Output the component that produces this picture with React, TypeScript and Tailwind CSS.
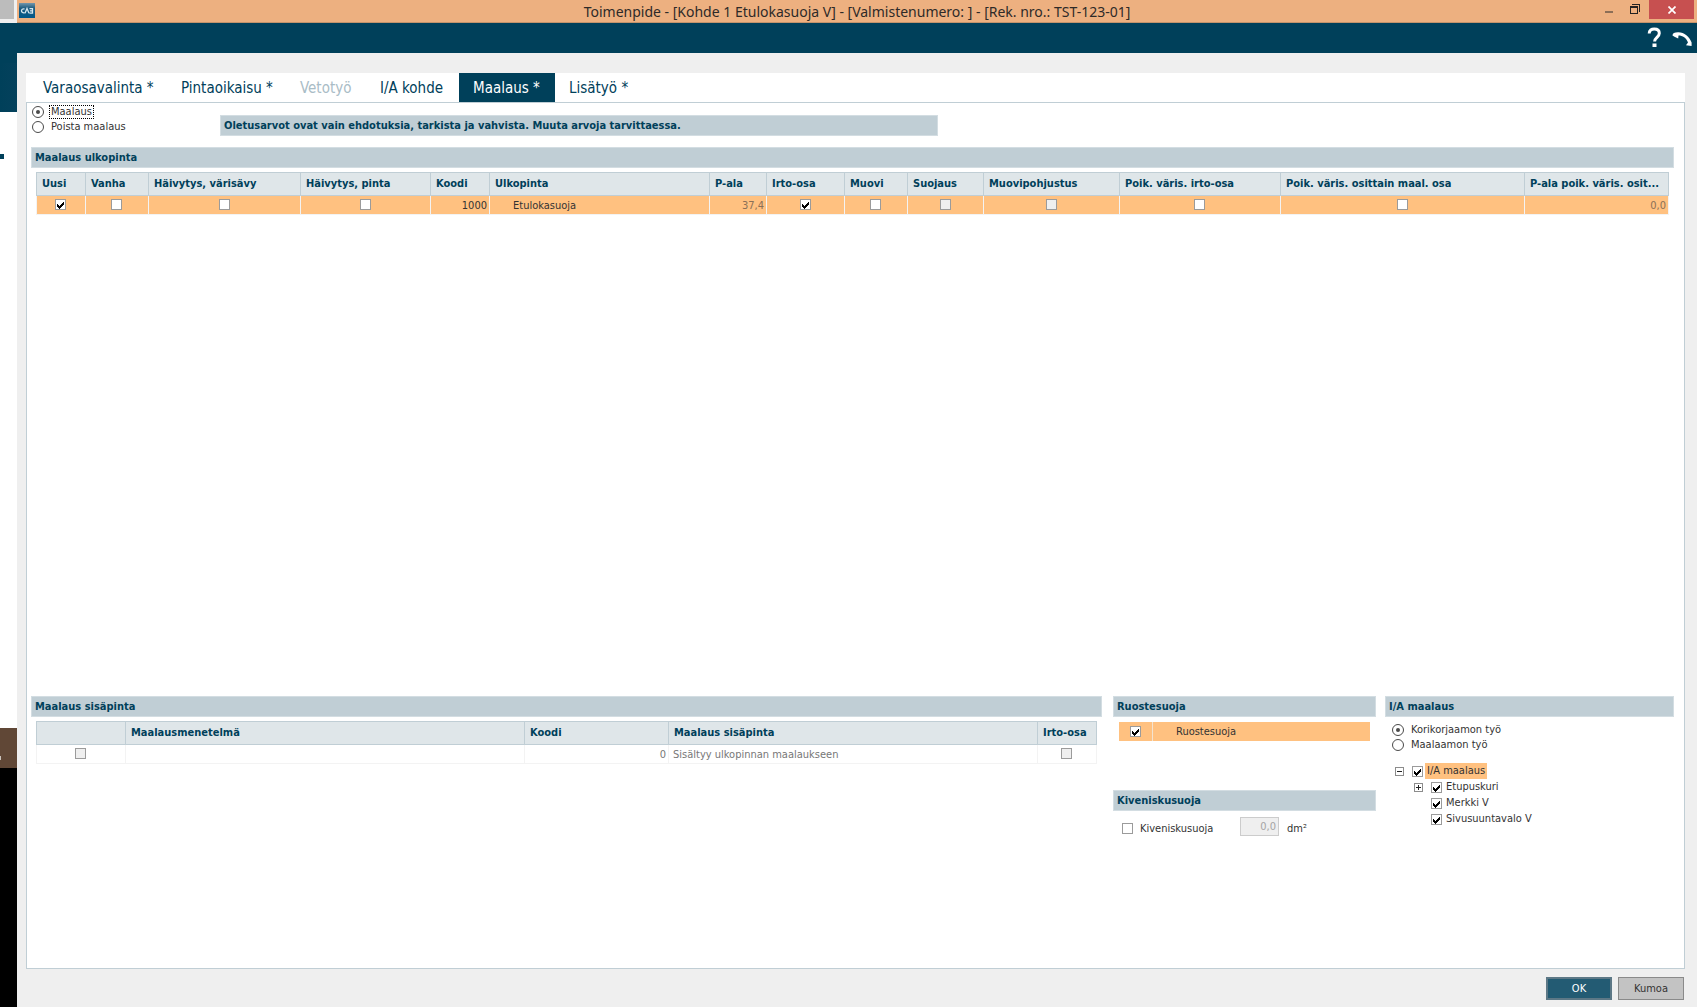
import { useState } from 'react'
import type { ReactNode } from 'react'

function Check({
  id,
  label,
  initial = false,
  disabled = false,
}: {
  id?: string
  label?: string
  initial?: boolean
  disabled?: boolean
}) {
  const [on, setOn] = useState(initial)
  return (
    <span className="relative inline-block size-[11px] shrink-0 align-top">
      <input
        id={id}
        type="checkbox"
        aria-label={label}
        checked={on}
        disabled={disabled}
        onChange={() => setOn(!on)}
        className="block size-[11px] appearance-none border border-[#9b9b9b] bg-white disabled:bg-[#efefef]"
      />
      {on && (
        <svg viewBox="0 0 11 11" className="pointer-events-none absolute inset-0 size-[11px]" shapeRendering="crispEdges">
          <path
            d="M2 5h1v3h-1z M3 6h1v3h-1z M4 7h1v3h-1z M5 6h1v3h-1z M6 5h1v3h-1z M7 4h1v3h-1z M8 3h1v3h-1z"
            fill="#000"
          />
        </svg>
      )}
    </span>
  )
}

function Radio({
  name,
  label,
  checked,
  onSelect,
  focused = false,
}: {
  name: string
  label: string
  checked: boolean
  onSelect: () => void
  focused?: boolean
}) {
  return (
    <label className="flex h-[15px] items-center gap-[5px]">
      <span className="relative inline-block size-3">
        <input
          type="radio"
          name={name}
          checked={checked}
          onChange={onSelect}
          className="block size-3 appearance-none rounded-full border border-[#4a4a4a] bg-white"
        />
        {checked && <span className="absolute inset-1 rounded-full bg-[#4a4a4a]" />}
      </span>
      <span className={focused ? 'border border-dotted border-black px-px leading-3' : 'px-0.5 leading-[14px]'}>{label}</span>
    </label>
  )
}

function SectionBar({ children }: { children: ReactNode }) {
  return (
    <h2 className="flex h-[21px] items-center border border-[#d3dde2] bg-[#c0ced5] px-[3px] text-[11px] font-bold text-[#00405a]">
      {children}
    </h2>
  )
}

const tabs = [
  { label: 'Varaosavalinta *', width: 'w-[138px]' },
  { label: 'Pintaoikaisu *', width: 'w-[119px]' },
  { label: 'Vetotyö', width: 'w-[80px]', disabled: true },
  { label: 'I/A kohde', width: 'w-[93px]' },
  { label: 'Maalaus *', width: 'w-[96px]', active: true },
  { label: 'Lisätyö *', width: 'w-[96px]' },
]

type Cell = { check?: boolean; disabled?: boolean; text?: string; align?: string }

const outer: { title: string; width: string; cell: Cell }[] = [
  { title: 'Uusi', width: 'w-[49px]', cell: { check: true } },
  { title: 'Vanha', width: 'w-[63px]', cell: { check: false } },
  { title: 'Häivytys, värisävy', width: 'w-[152px]', cell: { check: false } },
  { title: 'Häivytys, pinta', width: 'w-[130px]', cell: { check: false } },
  { title: 'Koodi', width: 'w-[59px]', cell: { text: '1000', align: 'text-right pr-0.5' } },
  { title: 'Ulkopinta', width: 'w-[220px]', cell: { text: 'Etulokasuoja', align: 'text-left pl-[23px]' } },
  { title: 'P-ala', width: 'w-[57px]', cell: { text: '37,4', align: 'text-right pr-0.5 text-[#8a7057]' } },
  { title: 'Irto-osa', width: 'w-[78px]', cell: { check: true } },
  { title: 'Muovi', width: 'w-[63px]', cell: { check: false } },
  { title: 'Suojaus', width: 'w-[76px]', cell: { check: false, disabled: true } },
  { title: 'Muovipohjustus', width: 'w-[136px]', cell: { check: false, disabled: true } },
  { title: 'Poik. väris. irto-osa', width: 'w-[161px]', cell: { check: false } },
  { title: 'Poik. väris. osittain maal. osa', width: 'w-[244px]', cell: { check: false } },
  { title: 'P-ala poik. väris. osit...', width: 'w-[144px]', cell: { text: '0,0', align: 'text-right pr-0.5 text-[#8a7057]' } },
]

const inner: { title: string; width: string; cell: Cell }[] = [
  { title: '', width: 'w-[89px]', cell: { check: false, disabled: true } },
  { title: 'Maalausmenetelmä', width: 'w-[399px]', cell: { text: '' } },
  { title: 'Koodi', width: 'w-[144px]', cell: { text: '0', align: 'text-right pr-0.5' } },
  { title: 'Maalaus sisäpinta', width: 'w-[369px]', cell: { text: 'Sisältyy ulkopinnan maalaukseen', align: 'text-left pl-1' } },
  { title: 'Irto-osa', width: 'w-[59px]', cell: { check: false, disabled: true } },
]

function Grid({ columns, highlighted }: { columns: typeof outer; highlighted?: boolean }) {
  return (
    <table className="w-full table-fixed border-collapse">
      <thead>
        <tr className="h-[23px] bg-[#dfe6e9]">
          {columns.map((c) => (
            <th
              key={c.title}
              scope="col"
              className={`${c.width} overflow-hidden border border-[#c0ced5] px-[5px] pt-0 pb-px text-left font-bold whitespace-nowrap text-[#00405a]`}
            >
              {c.title}
            </th>
          ))}
        </tr>
      </thead>
      <tbody>
        <tr className={highlighted ? 'h-[19px] bg-[#ffc180] text-[#333]' : 'h-[19px] bg-white text-[#777]'}>
          {columns.map((c) => (
            <td
              key={c.title}
              className={`border border-[#f3f3f3] p-0 pt-0.5 whitespace-nowrap ${c.cell.align ?? 'pr-px text-center'}`}
            >
              {c.cell.check !== undefined ? (
                <Check label={c.title || 'Valitse'} initial={c.cell.check} disabled={c.cell.disabled} />
              ) : (
                c.cell.text
              )}
            </td>
          ))}
        </tr>
      </tbody>
    </table>
  )
}

function Expander({ open }: { open: boolean }) {
  return (
    <button
      type="button"
      aria-label={open ? 'Sulje' : 'Avaa'}
      className="flex size-[9px] shrink-0 items-center justify-center border border-[#8c8c8c] bg-white"
    >
      <svg viewBox="0 0 7 7" className="size-[7px] shrink-0" shapeRendering="crispEdges">
        <path d={open ? 'M1 3h5v1h-5z' : 'M1 3h5v1h-5z M3 1h1v5h-1z'} fill="#222" />
      </svg>
    </button>
  )
}

function Backdrop() {
  return (
    <div className="flex w-[17px] shrink-0 flex-col bg-white">
      <div className="h-[23px] bg-[#efefef] pr-[3px]">
        <div className="h-[19px] bg-[#bcbcbc]" />
      </div>
      <div className="h-10 bg-[#00405a]" />
      <div className="h-[49px] bg-linear-to-r from-[#00405a] to-[#04415c]" />
      <div className="flex grow items-start pt-[42px]">
        <div className="h-[5px] w-1 bg-[#00405a]" />
      </div>
      <div className="flex h-10 items-center bg-[#604736] pt-5">
        <div className="h-1 w-px bg-[#c9c1ba]" />
      </div>
      <div className="h-[239px] bg-black" />
    </div>
  )
}

export default function App() {
  const [mode, setMode] = useState(0)
  const [work, setWork] = useState(0)
  return (
    <div className="flex min-h-screen bg-[#efefef] font-['DejaVu_Sans_Condensed','DejaVu_Sans',sans-serif] text-[11px] leading-[14px] text-[#333]">
      <Backdrop />
      <div className="flex min-w-0 grow flex-col">
        <header className="relative flex h-[23px] items-start justify-between border-b border-[#c4936c] bg-[#edb080] pr-[3px] pl-0.5">
          <svg viewBox="0 0 16 15" className="mt-[3px] h-[15px] w-4" role="img" aria-label="CAB">
            <defs>
              <linearGradient id="logo" x1="0" y1="0" x2="0" y2="1">
                <stop offset="0" stopColor="#7397ac" />
                <stop offset="0.35" stopColor="#1d5c80" />
                <stop offset="1" stopColor="#00588a" />
              </linearGradient>
            </defs>
            <rect width="16" height="15" fill="url(#logo)" />
            <path
              d="M5.500 6C1.500 5 1.500 10.500 5.500 9.800M6 10.300l2-4.800 2 4.800M10.500 5.700h3v4.400h-3M11 7.900h2.500"
              fill="none"
              stroke="#d5e6ee"
              strokeWidth="1.300"
            />
          </svg>
          <h1 className="pointer-events-none absolute inset-0 text-center font-['Noto_Sans',sans-serif] text-[14px] leading-[23px] font-normal text-[#2e2a28]">
            Toimenpide - [Kohde 1 Etulokasuoja V] - [Valmistenumero: ] - [Rek. nro.: TST-123-01]
          </h1>
          <div className="relative flex h-[19px]">
            <button type="button" aria-label="Pienennä" className="flex w-[26px] items-center justify-center pt-[5px]">
              <span className="h-0.5 w-2 bg-[#8c6e56]" />
            </button>
            <button type="button" aria-label="Palauta" className="flex w-[27px] items-start justify-start pt-1 pl-2">
              <svg viewBox="0 0 10 10" className="size-2.5" shapeRendering="crispEdges" fill="#222">
                <path d="M0 2h8v8h-8z M1 4v5h6v-5z" fillRule="evenodd" />
                <path d="M2 0h8v8h-1v-7h-7z" />
              </svg>
            </button>
            <button type="button" aria-label="Sulje" className="flex w-[45px] items-center justify-center bg-[#c75050]">
              <svg viewBox="0 0 8 8" className="size-2" fill="none" stroke="#fff" strokeWidth="1.700">
                <path d="M0.500 0.500l7 7M7.500 0.500l-7 7" />
              </svg>
            </button>
          </div>
        </header>

        <div className="flex h-[30px] items-start justify-end gap-2.5 bg-[#00405a] pt-1 pr-[5px]">
          <button type="button" aria-label="Ohje">
            <svg viewBox="0 0 15 21" className="h-[21px] w-[15px]">
              <path
                d="M2.200 6.500C2.200 3.200 4.500 2 7.300 2c3 0 5 1.500 5 4.200 0 4-4.700 4.200-4.700 8.300"
                fill="none"
                stroke="#fff"
                strokeWidth="3"
              />
              <rect x="5.500" y="16.500" width="4" height="3.500" fill="#fff" />
            </svg>
          </button>
          <button type="button" aria-label="Takaisin" className="pt-[5px]">
            <svg viewBox="0 0 20 14" className="h-3.5 w-5" fill="#fff">
              <path d="M0.500 3.500C0.500 1.200 2.500 0.200 6 0.200C12 0 17.500 4.500 19.600 10.500V14L14 13.200L16 10.500C14.500 6 10.500 3.500 6.500 3.500L6.200 6.500L2.500 4.800z" />
            </svg>
          </button>
        </div>

        <main className="mx-[9px] mt-5 mr-3 flex grow flex-col">
          <nav className="flex h-[29px] bg-white pl-[3px]" role="tablist">
            {tabs.map((t) => (
              <button
                key={t.label}
                type="button"
                role="tab"
                aria-selected={!!t.active}
                disabled={t.disabled}
                className={`${t.width} shrink-0 pl-3.5 text-left text-[15px] leading-5 whitespace-nowrap ${
                  t.active ? 'bg-[#00405a] text-white' : t.disabled ? 'text-[#a9bcc6]' : 'text-[#00405a]'
                }`}
              >
                {t.label}
              </button>
            ))}
          </nav>

          <div className="flex grow flex-col border border-[#c0ced5] bg-white pr-2.5 pl-1">
            <div className="flex h-11 gap-[88px] pt-px">
              <fieldset className="w-[101px] pl-px whitespace-nowrap">
                <Radio name="mode" label="Maalaus" checked={mode === 0} onSelect={() => setMode(0)} focused />
                <Radio name="mode" label="Poista maalaus" checked={mode === 1} onSelect={() => setMode(1)} />
              </fieldset>
              <div className="mt-[11px] w-[718px]">
                <SectionBar>Oletusarvot ovat vain ehdotuksia, tarkista ja vahvista. Muuta arvoja tarvittaessa.</SectionBar>
              </div>
            </div>

            <section className="grow">
              <SectionBar>Maalaus ulkopinta</SectionBar>
              <div className="mt-1 mr-1.5 ml-[5px]">
                <Grid columns={outer} highlighted />
              </div>
            </section>

            <div className="flex min-h-[272px]">
              <section className="min-w-0 grow">
                <SectionBar>Maalaus sisäpinta</SectionBar>
                <div className="mt-1 mr-1.5 ml-[5px]">
                  <Grid columns={inner} />
                </div>
              </section>

              <div className="ml-[11px] w-[263px] shrink-0">
                <section className="h-[94px]">
                  <SectionBar>Ruostesuoja</SectionBar>
                  <label className="mx-1.5 mt-[5px] flex h-[19px] items-center bg-[#ffc180]">
                    <span className="flex h-full w-[34px] items-center justify-center border-r border-[#f3e3d0]">
                      <Check initial />
                    </span>
                    <span className="pl-[23px]">Ruostesuoja</span>
                  </label>
                </section>
                <section>
                  <SectionBar>Kiveniskusuoja</SectionBar>
                  <div className="mt-1.5 flex h-[19px] items-center pl-[9px]">
                    <label className="flex w-[118px] items-center gap-[7px] pt-1">
                      <Check />
                      Kiveniskusuoja
                    </label>
                    <input
                      type="text"
                      disabled
                      defaultValue="0,0"
                      aria-label="Pinta-ala dm²"
                      className="h-[19px] w-[39px] border border-[#cccccc] bg-[#efefef] px-0.5 text-right text-[#a5a5a5]"
                    />
                    <span className="pt-1 pl-2">dm²</span>
                  </div>
                </section>
              </div>

              <section className="ml-[9px] w-[289px] shrink-0">
                <SectionBar>I/A maalaus</SectionBar>
                <fieldset className="mt-[5px] pl-[7px]">
                  <Radio name="work" label="Korikorjaamon työ" checked={work === 0} onSelect={() => setWork(0)} />
                  <Radio name="work" label="Maalaamon työ" checked={work === 1} onSelect={() => setWork(1)} />
                </fieldset>
                <ul className="mt-[11px] pl-2.5">
                  <li>
                    <div className="flex h-4 items-center">
                      <Expander open />
                      <label className="ml-2 flex items-center gap-0.5">
                        <Check initial />
                        <span className="bg-[#ffc180] px-0.5 leading-4">I/A maalaus</span>
                      </label>
                    </div>
                    <ul className="pl-[19px]">
                      {['Etupuskuri', 'Merkki V', 'Sivusuuntavalo V'].map((name, i) => (
                        <li key={name} className="flex h-4 items-center gap-2">
                          {i === 0 ? <Expander open={false} /> : <span className="w-[9px]" />}
                          <label className="flex items-center gap-1">
                            <Check initial />
                            {name}
                          </label>
                        </li>
                      ))}
                    </ul>
                  </li>
                </ul>
              </section>
            </div>
          </div>
        </main>

        <footer className="flex h-[38px] shrink-0 justify-end gap-1.5 pt-2 pr-[13px]">
          <button type="button" className="h-[23px] w-[66px] border-2 border-[#5d7886] bg-[#235b73] text-white">
            OK
          </button>
          <button type="button" className="h-[23px] w-[66px] border border-[#8a8a8a] bg-[#c3c3c3]">
            Kumoa
          </button>
        </footer>
      </div>
    </div>
  )
}
